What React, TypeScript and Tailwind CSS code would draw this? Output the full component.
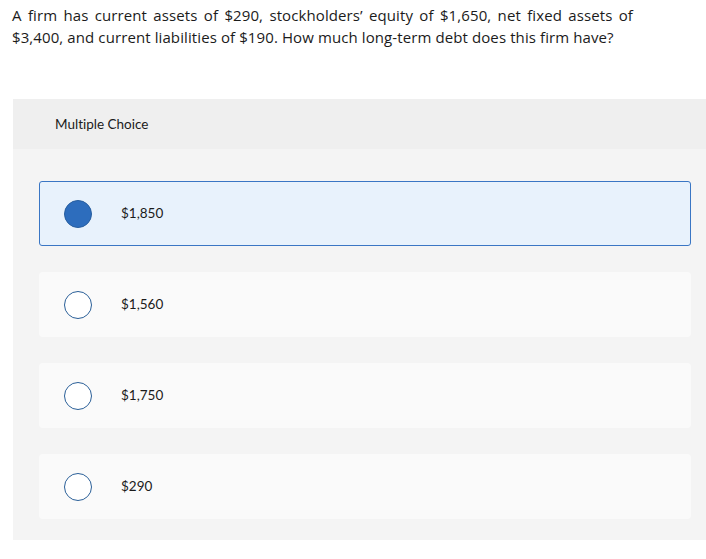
import React from "react";

const options = [
  { label: "$1,850", selected: true },
  { label: "$1,560", selected: false },
  { label: "$1,750", selected: false },
  { label: "$290", selected: false },
];

export default function App() {
  return (
    <div
      className="w-[706px] h-[559px] bg-white text-[#1b1b1b] overflow-hidden [font-variant-ligatures:none]"
      style={{ fontFamily: "Lato, 'Open Sans', sans-serif" }}
    >
      <div
        className="pl-[12px] pt-[4px] w-[633px] text-[15px] leading-[22px] tracking-[0.1px] text-justify"
        style={{ fontFamily: "'Open Sans', sans-serif" }}
      >
        A firm has current assets of $290, stockholders’ equity of $1,650, net fixed assets of $3,400, and current liabilities of $190. How much long-term debt does this firm have?
      </div>
      <div className="ml-[13px] mt-[51px] bg-[#f4f4f4]">
        <div className="h-[50px] bg-[#efefef] pl-[42px] flex items-center text-[13.5px]">
          Multiple Choice
        </div>
        <div className="pt-[32px] pb-[21px] pl-[26px] pr-[15px] flex flex-col gap-[26px]">
          {options.map((o) => (
            <div
              key={o.label}
              className={
                o.selected
                  ? "h-[65px] rounded-[3px] border border-[#3a76c4] bg-[#e8f2fc] flex items-center pl-[24px]"
                  : "h-[65px] rounded-[4px] bg-[#fafafa] flex items-center pl-[25px]"
              }
            >
              <div
                className={
                  o.selected
                    ? "w-[28px] h-[28px] rounded-full bg-[#2d6dbd] border border-[#275e9f]"
                    : "w-[28px] h-[28px] rounded-full bg-white border-[1.5px] border-[#2a5f98]"
                }
              />
              <span className="ml-[29px] text-[13.5px]">{o.label}</span>
            </div>
          ))}
        </div>
      </div>
    </div>
  );
}
